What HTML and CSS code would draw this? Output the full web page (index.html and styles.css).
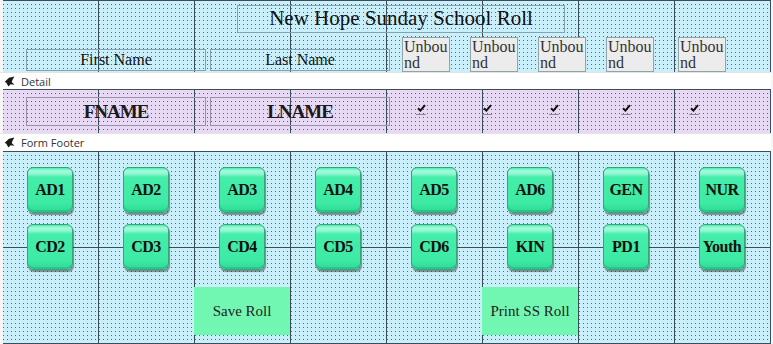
FILE: index.html
```html
<!DOCTYPE html>
<html lang="en">
<head>
  <meta charset="UTF-8" />
  <title>New Hope Sunday School Roll - Design</title>
  <link rel="stylesheet" href="styles.css">
</head>
<body>
  <div class="designer">
    <section class="sec header-sec">
      <div class="title-box">New Hope Sunday School Roll</div>
      <div class="label-row">
        <div class="label first">First Name</div>
        <div class="label last">Last Name</div>
        <div class="unbound u1">Unbound</div>
        <div class="unbound">Unbound</div>
        <div class="unbound">Unbound</div>
        <div class="unbound">Unbound</div>
        <div class="unbound u5">Unbound</div>
      </div>
    </section>

    <div class="bar">
      <svg class="bar-icon" width="11" height="11" viewBox="0 0 10 10"><polygon points="9.5,0.5 4.5,1.5 0.5,5.5 2,6 4,9.5 6,7.5 9.5,8 7,5.5 8,3" fill="#1a1a1a"/></svg>
      <span>Detail</span>
    </div>

    <section class="sec detail-sec">
      <div class="field first">FNAME</div>
      <div class="field last">LNAME</div>
      <span class="check c1"><svg width="9" height="8" viewBox="0 0 9 8"><path d="M1 4.2 L3.4 6.6 L8 1.2" fill="none" stroke="#111" stroke-width="2"/></svg></span>
      <span class="check c2"><svg width="9" height="8" viewBox="0 0 9 8"><path d="M1 4.2 L3.4 6.6 L8 1.2" fill="none" stroke="#111" stroke-width="2"/></svg></span>
      <span class="check c3"><svg width="9" height="8" viewBox="0 0 9 8"><path d="M1 4.2 L3.4 6.6 L8 1.2" fill="none" stroke="#111" stroke-width="2"/></svg></span>
      <span class="check c4"><svg width="9" height="8" viewBox="0 0 9 8"><path d="M1 4.2 L3.4 6.6 L8 1.2" fill="none" stroke="#111" stroke-width="2"/></svg></span>
      <span class="check c5"><svg width="9" height="8" viewBox="0 0 9 8"><path d="M1 4.2 L3.4 6.6 L8 1.2" fill="none" stroke="#111" stroke-width="2"/></svg></span>
    </section>

    <div class="bar bar-footer">
      <svg class="bar-icon" width="11" height="11" viewBox="0 0 10 10"><polygon points="9.5,0.5 4.5,1.5 0.5,5.5 2,6 4,9.5 6,7.5 9.5,8 7,5.5 8,3" fill="#1a1a1a"/></svg>
      <span>Form Footer</span>
    </div>

    <section class="sec footer-sec">
      <div class="btn-grid">
        <button class="btn">AD1</button>
        <button class="btn">AD2</button>
        <button class="btn">AD3</button>
        <button class="btn">AD4</button>
        <button class="btn">AD5</button>
        <button class="btn">AD6</button>
        <button class="btn">GEN</button>
        <button class="btn">NUR</button>

        <button class="btn">CD2</button>
        <button class="btn">CD3</button>
        <button class="btn">CD4</button>
        <button class="btn">CD5</button>
        <button class="btn">CD6</button>
        <button class="btn">KIN</button>
        <button class="btn">PD1</button>
        <button class="btn">Youth</button>

        <button class="cmd save">Save Roll</button>
        <button class="cmd print">Print SS Roll</button>
      </div>
    </section>
  </div>
</body>
</html>
```

FILE: styles.css
```css
* {
  margin: 0;
  padding: 0;
  box-sizing: border-box;
}

body {
  background: #f6f6f6;
  font-family: 'Liberation Serif', serif;
  color: #1a1a1a;
  width: 773px;
  height: 344px;
  overflow: hidden;
}

.designer {
  padding-left: 3px;
  width: 771px;
}

/* design grid: thick lines every 96px, dots every 4px */
.sec {
  width: 768px;
  background-color: #c9f0fa;
  background-image:
    linear-gradient(90deg, transparent 95px, #3b4c5a 95px),
    linear-gradient(180deg, #3b4c5a 1px, transparent 1px),
    conic-gradient(from 270deg at 1px 1px, #59666e 25%, transparent 0);
  background-size: 96px 96px, 96px 96px, 4px 4px;
}

.header-sec {
  height: 72px;
  padding-top: 5px;
}

.title-box {
  margin-left: 234px;
  width: 328px;
  height: 28px;
  border: 1px solid #86a2ae;
  font-size: 21px;
  line-height: 25px;
  text-align: center;
  color: #111;
}

.label-row {
  display: flex;
  align-items: flex-end;
  height: 39px;
}

.label {
  width: 180px;
  height: 22px;
  border: 1px solid #86a2ae;
  font-size: 16px;
  line-height: 20px;
  text-align: center;
  margin-bottom: 1px;
  color: #111;
}

.label.first { margin-left: 23px; }
.label.last { margin-left: 4px; }

.unbound {
  width: 48px;
  height: 35px;
  margin-left: 20px;
  background: #ececec;
  border: 1px solid #8fa3ab;
  font-size: 16px;
  line-height: 16px;
  padding: 1px 0 0 1px;
  color: #333;
  word-break: break-all;
  overflow: hidden;
}

.unbound.u1 { margin-left: 12px; }
.unbound.u5 { margin-left: 24px; }

.bar {
  height: 17px;
  background: #fff;
  display: flex;
  align-items: center;
  gap: 6px;
  padding-left: 4px;
  font-family: 'Open Sans', 'Noto Sans', sans-serif;
  font-size: 11px;
  color: #333;
  margin-left: -3px;
  border-top: 1px solid #e4e4e4;
}

.bar-footer {
  height: 18px;
}

.detail-sec {
  height: 44px;
  background-color: #e7d8f3;
  display: flex;
  align-items: flex-start;
  padding-top: 8px;
}

.field {
  width: 180px;
  height: 29px;
  border: 1px solid #9c8eaa;
  font-size: 19px;
  font-weight: bold;
  line-height: 27px;
  letter-spacing: -1px;
  text-align: center;
  color: #1a1a1a;
}

.field.first { margin-left: 23px; }
.field.last { margin-left: 4px; }

.check {
  width: 10px;
  margin-top: 7px;
  padding-bottom: 2px;
  border-bottom: 1px solid #8a8a8a;
  display: flex;
  justify-content: center;
}

.check.c1 { margin-left: 26px; }
.check.c2 { margin-left: 56px; }
.check.c3 { margin-left: 57px; }
.check.c4 { margin-left: 62px; }
.check.c5 { margin-left: 58px; }

.footer-sec {
  height: 193px;
  padding-top: 16px;
}

.btn-grid {
  display: grid;
  grid-template-columns: repeat(8, 96px);
  grid-template-rows: 46px 46px 48px;
  row-gap: 11px;
  margin-left: -1px;
}

.btn {
  justify-self: center;
  width: 46px;
  height: 46px;
  border: 1px solid #3aa27a;
  border-radius: 6px;
  background: linear-gradient(180deg, #4cefb0 0, #a6fadc 3px, #8df7cf 6px, #45eeab 9px, #3deaa4 80%, #2fd896 100%);
  box-shadow: inset 0 -2px 0 #2cc589, 1px 2px 1px rgba(60, 60, 60, 0.55);
  font-family: 'Liberation Serif', serif;
  font-weight: bold;
  font-size: 16px;
  letter-spacing: -0.5px;
  color: #111;
}

.cmd {
  width: 96px;
  height: 48px;
  margin-top: 6px;
  border: none;
  background: #72f7b3;
  font-family: 'Liberation Serif', serif;
  font-size: 15px;
  color: #222;
}

.cmd.save { grid-column: 3; }
.cmd.print { grid-column: 6; }
```
